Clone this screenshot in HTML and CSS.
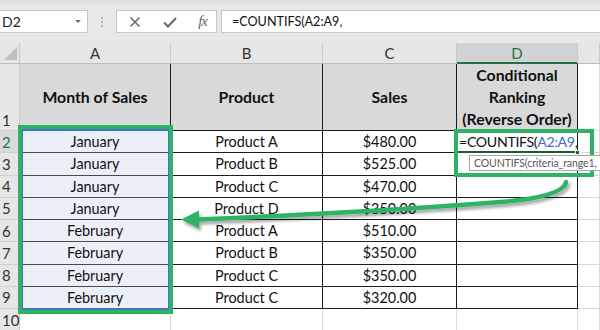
FILE: index.html
```html
<!DOCTYPE html>
<html>
<head>
<meta charset="utf-8">
<link rel="stylesheet" href="styles.css">
</head>
<body>
<div class="app">
  <div class="bar">
    <div class="namebox"><span>D2</span><span class="dd"></span></div>
    <div class="dots"><i></i><i></i><i></i></div>
    <div class="fbtns">
      <svg class="ic" width="14" height="14" viewBox="0 0 14 14"><path d="M2.5 2.5 L11.5 11.5 M11.5 2.5 L2.5 11.5" stroke="#6a6a6a" stroke-width="1.5" fill="none"/></svg>
      <svg class="ic" width="16" height="14" viewBox="0 0 16 14"><path d="M2 7.5 L6 11.5 L14 3" stroke="#6a6a6a" stroke-width="2" fill="none"/></svg>
      <span class="fx">fx</span>
    </div>
    <div class="fbox">=COUNTIFS(A2:A9,</div>
  </div>
  <div class="sheet">
    <div class="corner"><span class="tri"></span></div>
    <div class="ch">A</div><div class="ch">B</div><div class="ch">C</div><div class="ch sel">D</div><div class="ch"></div>

    <div class="rh r1">1</div>
    <div class="c t hd">Month of Sales</div>
    <div class="c t hd">Product</div>
    <div class="c t hd">Sales</div>
    <div class="c t hd multi">Conditional<br>Ranking<br>(Reverse Order)</div>
    <div class="c"></div>

    <div class="rh sel">2</div>
    <div class="c t a">January</div><div class="c t">Product A</div><div class="c t">$480.00</div>
    <div class="c t f">=COUNTIFS(<span class="ref">A2:A9</span>,</div><div class="c"></div>

    <div class="rh">3</div>
    <div class="c t a">January</div><div class="c t">Product B</div><div class="c t">$525.00</div><div class="c t"></div><div class="c"></div>

    <div class="rh">4</div>
    <div class="c t a">January</div><div class="c t">Product C</div><div class="c t">$470.00</div><div class="c t"></div><div class="c"></div>

    <div class="rh">5</div>
    <div class="c t a">January</div><div class="c t">Product D</div><div class="c t">$350.00</div><div class="c t"></div><div class="c"></div>

    <div class="rh">6</div>
    <div class="c t a">February</div><div class="c t">Product A</div><div class="c t">$510.00</div><div class="c t"></div><div class="c"></div>

    <div class="rh">7</div>
    <div class="c t a">February</div><div class="c t">Product B</div><div class="c t">$350.00</div><div class="c t"></div><div class="c"></div>

    <div class="rh">8</div>
    <div class="c t a">February</div><div class="c t">Product C</div><div class="c t">$350.00</div><div class="c t"></div><div class="c"></div>

    <div class="rh">9</div>
    <div class="c t a">February</div><div class="c t">Product C</div><div class="c t">$320.00</div><div class="c t"></div><div class="c"></div>

    <div class="rh">10</div>
    <div class="c"></div><div class="c"></div><div class="c"></div><div class="c"></div><div class="c"></div>
  </div>

  <div class="refbox"></div>
  <div class="handle"></div>
  <div class="gbox gbox-a"></div>
  <div class="gbox gbox-d"></div>
  <div class="tip">COUNTIFS(criteria_range1,</div>
  <svg class="arrow" width="600" height="330" viewBox="0 0 600 330">
    <defs>
      <filter id="sh" x="-10%" y="-50%" width="120%" height="200%">
        <feGaussianBlur in="SourceAlpha" stdDeviation="1.5"/>
        <feOffset dx="1.5" dy="2.5" result="b"/>
        <feComponentTransfer><feFuncA type="linear" slope="0.35"/></feComponentTransfer>
        <feMerge><feMergeNode/><feMergeNode in="SourceGraphic"/></feMerge>
      </filter>
    </defs>
    <g filter="url(#sh)">
      <path d="M566 182 Q563 197 500 202 Q360 213 196 219.5" stroke="#2eb366" stroke-width="4.5" fill="none" stroke-linecap="round"/>
      <polygon points="181,219.5 199,210.5 199,228.5" fill="#2eb366"/>
    </g>
  </svg>
</div>
</body>
</html>
```

FILE: styles.css
```css
* { box-sizing: border-box; }
html, body { margin: 0; padding: 0; }
body {
  width: 600px;
  height: 330px;
  overflow: hidden;
  background: #ffffff;
  font-family: "Lato", "Open Sans", sans-serif;
  color: #111;
}
.app {
  position: relative;
  width: 600px;
  height: 330px;
  overflow: hidden;
}
.bar {
  height: 43px;
  background: linear-gradient(#dedede, #e8e8e8 8px, #e8e8e8);
  display: flex;
  align-items: flex-start;
  padding-top: 10px;
}
.namebox {
  width: 88px;
  height: 23px;
  background: #fff;
  border: 1px solid #c8c8c8;
  border-left: none;
  display: flex;
  align-items: center;
  justify-content: space-between;
  padding: 0 6px 0 2px;
  font-size: 14px;
  color: #222;
}
.dd {
  width: 0;
  height: 0;
  border-left: 3.5px solid transparent;
  border-right: 3.5px solid transparent;
  border-top: 3.5px solid #6f6f6f;
}
.dots {
  width: 28px;
  height: 23px;
  display: flex;
  flex-direction: column;
  align-items: center;
  justify-content: center;
  gap: 2px;
}
.dots i {
  display: block;
  width: 2px;
  height: 2px;
  background: #b5b5b5;
}
.fbtns {
  width: 101px;
  height: 23px;
  background: #fff;
  border: 1px solid #c8c8c8;
  display: flex;
  align-items: center;
  justify-content: space-between;
  padding: 0 9px 0 11px;
}
.ic { display: block; }
.fx {
  font-family: "Liberation Serif", serif;
  font-style: italic;
  font-size: 15px;
  color: #666;
  letter-spacing: -1px;
}
.fbox {
  margin-left: 4px;
  flex: 1;
  height: 23px;
  background: #fff;
  border: 1px solid #c8c8c8;
  border-right: none;
  font-size: 12.6px;
  padding-left: 10px;
  line-height: 22px;
  color: #111;
}
.sheet {
  display: grid;
  grid-template-columns: 20px 151px 152px 134px 121px 22px;
  grid-template-rows: 21px 67px repeat(8, 22.25px) 22px;
}
.corner {
  background: #e6e6e6;
  border-right: 1px solid #c9c9c9;
  border-bottom: 1px solid #bdbdbd;
  position: relative;
}
.tri {
  position: absolute;
  right: 2px;
  bottom: 3px;
  width: 0;
  height: 0;
  border-left: 13px solid transparent;
  border-bottom: 13px solid #bfbfbf;
}
.ch {
  background: #e6e6e6;
  border-right: 1px solid #c9c9c9;
  border-bottom: 1px solid #bdbdbd;
  display: flex;
  align-items: center;
  justify-content: center;
  font-size: 15px;
  color: #333;
}
.ch.sel {
  background: #d2d2d2;
  color: #217346;
  border-bottom: 2px solid #217346;
}
.rh {
  background: #e6e6e6;
  border-right: 1px solid #c9c9c9;
  border-bottom: 1px solid #cfcfcf;
  font-size: 15px;
  color: #333;
  padding-left: 2px;
  display: flex;
  align-items: center;
}
.rh.r1 { align-items: flex-end; padding-bottom: 1px; }
.rh.sel { color: #217346; background: #dadada; }
.c {
  border-right: 1px solid #d9d9d9;
  border-bottom: 1px solid #d9d9d9;
  background: #fff;
  display: flex;
  align-items: center;
  justify-content: center;
  font-size: 14.4px;
  color: #111;
  white-space: nowrap;
}
.c.t {
  border-right-color: #1c1c1c;
  border-bottom-color: #1c1c1c;
}
.c.hd {
  background: #d9d9d9;
  font-weight: bold;
  font-size: 15.8px;
  text-align: center;
  line-height: 22px;
}
.c.a {
  background: #ebeff8;
  border-bottom-color: #4a4a4a;
}
.c.f {
  justify-content: flex-start;
  padding-left: 2px;
  font-size: 14.2px;
  letter-spacing: -0.35px;
  overflow: visible;
  border-bottom: 2px solid #1e5a34;
}
.ref { color: #3b6cc6; }
.refbox {
  position: absolute;
  left: 21px;
  top: 129px;
  width: 149px;
  height: 181px;
  border: 2px solid #4472c4;
}
.handle {
  position: absolute;
  left: 575px;
  top: 150px;
  width: 5px;
  height: 5px;
  background: #1e5a34;
  border: 1px solid #fff;
}
.tip {
  position: absolute;
  left: 469px;
  top: 155px;
  width: 140px;
  height: 16px;
  padding: 0 3px 0 4px;
  background: #fff;
  border: 1px solid #a6a6a6;
  font-size: 10.6px;
  letter-spacing: -0.15px;
  line-height: 14px;
  color: #595959;
  white-space: nowrap;
}
.gbox {
  position: absolute;
  border: 4px solid #2eb366;
}
.gbox-a {
  left: 18px;
  top: 125px;
  width: 155px;
  height: 189px;
}
.gbox-d {
  left: 454px;
  top: 129px;
  width: 140px;
  height: 48px;
}
.arrow {
  position: absolute;
  left: 0;
  top: 0;
}
```
